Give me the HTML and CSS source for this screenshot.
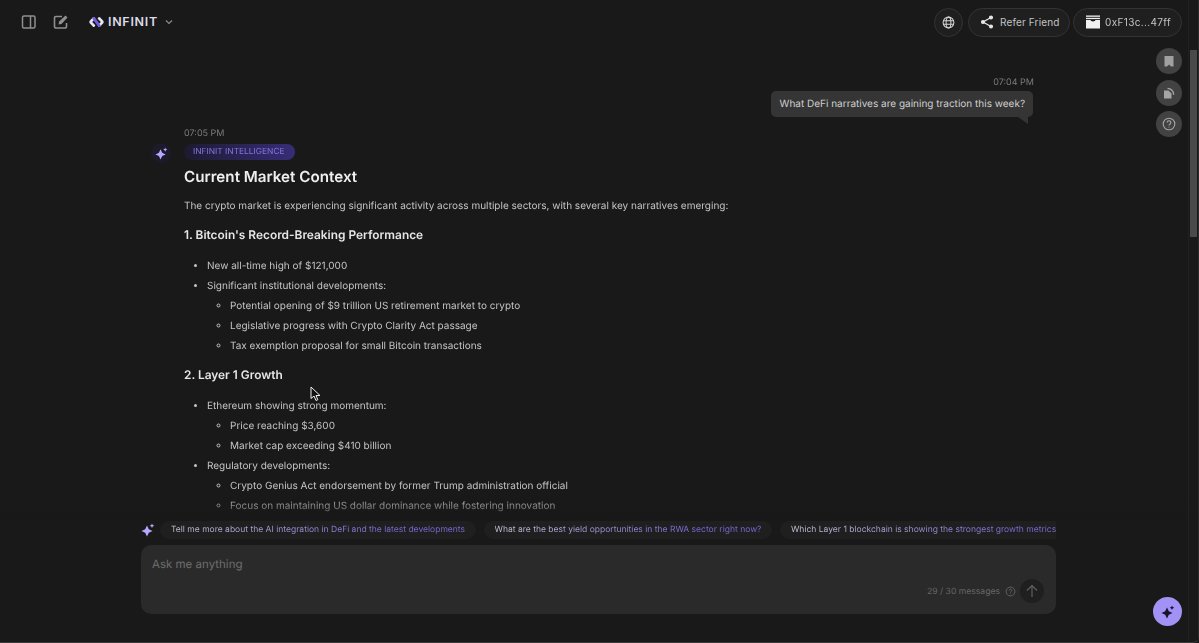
FILE: index.html
```html
<!DOCTYPE html>
<html lang="en">
<head>
<meta charset="utf-8">
<title>Infinit</title>
<link rel="stylesheet" href="styles.css">
</head>
<body>
<div class="app">
  <header class="topbar">
    <div class="topbar-left">
      <svg class="ico-plain" width="16" height="16" viewBox="0 0 16 16" fill="none" stroke="#8f8f8f" stroke-width="1.5"><rect x="1.5" y="2" width="12.5" height="12" rx="1.5"/><path d="M9.5 2v12"/></svg>
      <svg class="ico-plain" width="16" height="16" viewBox="0 0 16 16" fill="none" stroke="#8f8f8f" stroke-width="1.6"><path d="M13.5 9v3.5a1.5 1.5 0 0 1-1.5 1.5H3a1.5 1.5 0 0 1-1.5-1.5V4A1.5 1.5 0 0 1 3 2.500h6"/><path d="M5.500 10.500l.6-3L12.500 1.500l2 2L8.500 10z" fill="#8f8f8f" stroke="none"/></svg>
      <div class="brand">
        <svg width="15" height="12" viewBox="0 0 15 12" fill="none" stroke-width="2.800" stroke-linecap="round" stroke-linejoin="round"><path d="M4.800 2.400L2 5.400q-.5.600 0 1.200l2.800 3" stroke="#e8e8f4"/><path d="M10.200 2.400L13 5.400q.5.600 0 1.200l-2.800 3" stroke="#e8e8f4"/><path d="M4.800 2.400L10.200 9.600" stroke="#6f5ce0"/></svg>
        <span class="brand-name">INFINIT</span>
        <svg class="brand-caret" width="8" height="6" viewBox="0 0 8 6" fill="none" stroke="#8a8a8a" stroke-width="1.200"><path d="M1 1.500l3 3 3-3"/></svg>
      </div>
    </div>
    <div class="topbar-right">
      <button class="round-btn"><svg width="13" height="13" viewBox="0 0 14 14" fill="none" stroke="#d5d5d5" stroke-width="1.100"><circle cx="7" cy="7" r="5.800"/><ellipse cx="7" cy="7" rx="2.600" ry="5.800"/><path d="M1.500 5h11M1.500 9h11"/></svg></button>
      <button class="pill-btn refer"><svg width="14" height="14" viewBox="0 0 14 14" fill="none" stroke="#e6e6e6" stroke-width="1.300"><path d="M11 2.500L3 7l8 4.500"/><circle cx="11" cy="2.500" r="1.400" fill="#e6e6e6"/><circle cx="3" cy="7" r="1.400" fill="#e6e6e6"/><circle cx="11" cy="11.500" r="1.400" fill="#e6e6e6"/></svg><span>Refer Friend</span></button>
      <button class="pill-btn wallet"><svg width="14" height="14" viewBox="0 0 14 14" fill="#f2f2f2"><rect y="0.500" width="14" height="1.300"/><rect y="2.800" width="14" height="1.300"/><path d="M0 5h4.500a2.500 1.500 0 0 0 5 0H14v8.500H0z"/></svg><span>0xF13c...47ff</span></button>
    </div>
  </header>

  <main class="stage">
    <div class="scroll">
      <div class="thread">
        <div class="user-msg">
          <time class="stamp stamp-user">07:04 PM</time>
          <div class="bubble">What DeFi narratives are gaining traction this week?</div>
        </div>
        <div class="ai-msg">
          <div class="ai-mark"><svg class="spark" width="13" height="13" viewBox="0 0 14 14"><path d="M6 2.500L7.800 6.200 11.500 8 7.800 9.800 6 13.500 4.200 9.800.5 8l3.700-1.800z" fill="#b7a8ff"/><path d="M11 .5l.7 1.600 1.600.7-1.600.7-.7 1.600-.7-1.600-1.600-.7 1.600-.7z" fill="#b7a8ff"/></svg></div>
          <div class="ai-body">
            <time class="stamp">07:05 PM</time>
            <span class="badge">INFINIT INTELLIGENCE</span>
            <h2>Current Market Context</h2>
            <p>The crypto market is experiencing significant activity across multiple sectors, with several key narratives emerging:</p>
            <h3>1. Bitcoin's Record-Breaking Performance</h3>
            <ul>
              <li>New all-time high of $121,000</li>
              <li>Significant institutional developments:
                <ul>
                  <li>Potential opening of $9 trillion US retirement market to crypto</li>
                  <li>Legislative progress with Crypto Clarity Act passage</li>
                  <li>Tax exemption proposal for small Bitcoin transactions</li>
                </ul>
              </li>
            </ul>
            <h3>2. Layer 1 Growth</h3>
            <ul>
              <li>Ethereum showing strong momentum:
                <ul>
                  <li>Price reaching $3,600</li>
                  <li>Market cap exceeding $410 billion</li>
                </ul>
              </li>
              <li>Regulatory developments:
                <ul>
                  <li>Crypto Genius Act endorsement by former Trump administration official</li>
                  <li>Focus on maintaining US dollar dominance while fostering innovation</li>
                </ul>
              </li>
            </ul>
          </div>
        </div>
      </div>
      <div class="fade"></div>
      <svg class="cursor" width="12" height="16" viewBox="0 0 12 16"><path d="M1 1v11.500l3-2.500 2 4.500 1.800-.8L6 9.500h4z" fill="#111" stroke="#eee" stroke-width="1"/></svg>
    </div>

    <section class="composer-area">
      <div class="suggest-row">
        <svg class="suggest-spark" width="14" height="14" viewBox="0 0 14 14"><path d="M6 2.500L7.800 6.200 11.500 8 7.800 9.800 6 13.500 4.200 9.800.5 8l3.700-1.800z" fill="#b7a8ff"/><path d="M11 .5l.7 1.600 1.600.7-1.600.7-.7 1.600-.7-1.600-1.600-.7 1.600-.7z" fill="#b7a8ff"/></svg>
        <div class="suggest-list">
          <span class="chip"><span class="chip-text">Tell me more about the AI integration in DeFi and the latest developments</span></span>
          <span class="chip"><span class="chip-text">What are the best yield opportunities in the RWA sector right now?</span></span>
          <span class="chip"><span class="chip-text">Which Layer 1 blockchain is showing the strongest growth metrics right now?</span></span>
        </div>
      </div>
      <div class="composer">
        <div class="placeholder">Ask me anything</div>
        <div class="composer-foot">
          <span class="quota">29 / 30 messages</span>
          <svg width="11" height="11" viewBox="0 0 12 12" fill="none" stroke="#666" stroke-width="1"><circle cx="6" cy="6" r="4.800"/><path d="M4.600 4.800a1.400 1.400 0 1 1 2.200 1.200c-.5.300-.8.600-.8 1.100M6 8.300v.6"/></svg>
          <button class="send"><svg width="14" height="14" viewBox="0 0 14 14" fill="none" stroke="#5f5f5f" stroke-width="1.200"><path d="M7 13V1.500M2 6.500l5-5 5 5"/></svg></button>
        </div>
      </div>
    </section>
  </main>

  <aside class="side-tools">
    <button class="tool"><svg width="10" height="11" viewBox="0 0 10 11" fill="#a0a0a0"><path d="M.5 0h9v10.500H7L5 8.500l-2 2H.5z"/></svg></button>
    <button class="tool"><svg width="12" height="12" viewBox="0 0 12 12"><path d="M1 3.500h4.500L8.500 6.500V11.500H1z" fill="#a5a5a5"/><path d="M4.500 1.400c3.500 0 6.200 2.800 6.200 6.400" fill="none" stroke="#a5a5a5" stroke-width="1.400"/></svg></button>
    <button class="tool"><svg width="14" height="14" viewBox="0 0 14 14" fill="none" stroke="#a5a5a5" stroke-width="1.100"><circle cx="7" cy="7" r="5.800"/><path d="M5.200 5.500a1.800 1.800 0 1 1 2.800 1.500c-.6.400-1 .7-1 1.400M7 9.800v.8"/></svg></button>
  </aside>
  <div class="scroll-track"><div class="scroll-thumb"></div></div>
  <button class="fab"><svg width="14" height="14" viewBox="0 0 14 14"><path d="M6 2.500L7.800 6.200 11.500 8 7.800 9.800 6 13.500 4.200 9.800.5 8l3.700-1.800z" fill="#17132b"/><path d="M11 .5l.7 1.600 1.600.7-1.600.7-.7 1.600-.7-1.600-1.600-.7 1.600-.7z" fill="#17132b"/></svg></button>
</div>
</body>
</html>
```
FILE: styles.css
```css
* { box-sizing: border-box; }
html, body { margin: 0; height: 100%; overflow: hidden; }
body { background: #191919; color: #d9d9d9; font-family: Inter, "Liberation Sans", sans-serif; text-rendering: geometricPrecision; }
button { font-family: inherit; border: 0; padding: 0; cursor: pointer; }

.app { position: relative; height: 643px; display: flex; flex-direction: column; overflow: hidden; background: #191919; border-bottom: 1px solid #3a3a3a; border-bottom-right-radius: 6px; filter: blur(0.35px); }

.topbar { flex: none; height: 44px; display: flex; justify-content: space-between; align-items: center; padding: 0 17px 0 21px; }
.topbar-left { display: flex; align-items: center; gap: 16px; }
.ico-plain { display: block; }
.brand { display: flex; align-items: center; margin-left: 4px; }
.brand-name { margin-left: 4px; font-size: 12.500px; font-weight: 600; letter-spacing: 0.7px; color: #dcdce8; }
.brand-caret { margin-left: 7px; }
.topbar-right { display: flex; align-items: center; gap: 3px; }
.round-btn { width: 29px; height: 29px; margin-right: 2px; display: flex; align-items: center; justify-content: center; border-radius: 50%; background: #1f1f1f; border: 1px solid #333; }
.pill-btn { height: 29px; display: flex; align-items: center; gap: 6px; padding: 0 0 0 12px; border-radius: 15px; background: #1f1f1f; border: 1px solid #333; color: #c4c4c4; font-size: 10px; white-space: nowrap; }
.pill-btn.refer { width: 102px; padding-left: 11px; }
.pill-btn.wallet { width: 109px; gap: 5px; }
.pill-btn.wallet span { letter-spacing: 0.35px; }
.pill-btn.refer span { letter-spacing: 0.15px; }

.stage { flex: 1; min-height: 0; display: flex; flex-direction: column; }
.scroll { position: relative; flex: 1; min-height: 0; overflow: hidden; }
.thread { width: 915px; margin-left: 141px; padding-top: 33px; }

.stamp { display: block; font-size: 9px; line-height: 12px; color: #7b7b7b; }
.stamp-user { margin-right: -1px; }
.user-msg { display: flex; flex-direction: column; align-items: flex-end; padding-right: 23px; }
.bubble { position: relative; margin-top: 2px; height: 26px; padding: 0 8px 0 9px; display: flex; align-items: center; background: #353535; border-radius: 5px; font-size: 10px; color: #cfcfcf; }
.bubble::after { content: ""; position: absolute; right: 5px; bottom: -7px; border-top: 7px solid #353535; border-left: 10px solid transparent; }

.ai-msg { position: relative; margin-top: 11px; padding-left: 43px; }
.ai-mark { position: absolute; left: 10px; top: 15px; width: 20px; height: 20px; display: flex; align-items: center; justify-content: center; border-radius: 50%; background: #1d1b2a; }
.badge { display: block; width: fit-content; margin-top: 4px; height: 16px; line-height: 16px; padding: 0 10px 0 9px; border-radius: 8px; background: linear-gradient(to right, #1d1a30, #372d78); color: #8574de; font-size: 8.400px; }
.ai-body h2 { margin: 7px 0 0; font-size: 15.200px; line-height: 20px; font-weight: 600; color: #efefef; }
.ai-body p { margin: 9px 0 0; font-size: 10px; line-height: 20px; color: #c4c4c4; }
.ai-body h3 { margin: 9px 0 0; font-size: 11.900px; line-height: 20px; font-weight: 600; color: #e6e6e6; }
.ai-body ul { margin: 0; padding-left: 23px; list-style: disc; font-size: 10px; line-height: 20px; color: #c4c4c4; }
.ai-body > ul { margin-top: 11px; }
.ai-body ul ul { list-style: circle; }
.fade { position: absolute; left: 0; right: 0; bottom: 0; height: 24px; background: linear-gradient(to bottom, rgba(25,25,25,0), #191919); }
.cursor { position: absolute; left: 310px; top: 342px; }

.composer-area { flex: none; width: 915px; margin: 0 0 28px 141px; }
.suggest-row { display: flex; align-items: center; gap: 12px; height: 18px; }
.suggest-spark { flex: none; }
.suggest-list { display: flex; gap: 7.500px; min-width: 0; flex: 1; overflow: hidden; margin-left: -7px; }
.chip { flex: none; height: 18px; line-height: 18px; padding: 0 11px; border-radius: 9px; background: #1f1f1f; font-size: 8.530px; }
.chip-text { display: block; background: linear-gradient(to right, #c6c6d6, #7a68d8 75%); -webkit-background-clip: text; background-clip: text; color: transparent; }
.composer { margin-top: 6px; height: 69px; position: relative; padding: 11px; background: #2a2a2a; border-radius: 10px; }
.placeholder { font-size: 11.500px; line-height: 16px; color: #6e6e6e; }
.composer-foot { position: absolute; right: 12px; bottom: 11px; display: flex; align-items: center; gap: 5px; }
.quota { font-size: 8.600px; color: #666; margin-top: 1px; }
.send { width: 24px; height: 24px; margin-left: -1px; display: flex; align-items: center; justify-content: center; border-radius: 50%; background: #1f1f1f; }

.side-tools { position: absolute; left: 1156px; top: 48px; display: flex; flex-direction: column; gap: 5.500px; }
.tool { width: 26px; height: 26px; display: flex; align-items: center; justify-content: center; border-radius: 50%; background: #424242; }
.scroll-track { position: absolute; right: 0; top: 0; bottom: 0; width: 11px; border-left: 1px solid #212121; border-right: 1px solid #2a2a2a; }
.scroll-thumb { margin: 50px 1px 0 1px; width: 7px; height: 187px; background: #4a4a4a; }
.fab { position: absolute; left: 1153px; top: 597px; width: 29px; height: 29px; display: flex; align-items: center; justify-content: center; border-radius: 50%; background: #a392f5; }
```
